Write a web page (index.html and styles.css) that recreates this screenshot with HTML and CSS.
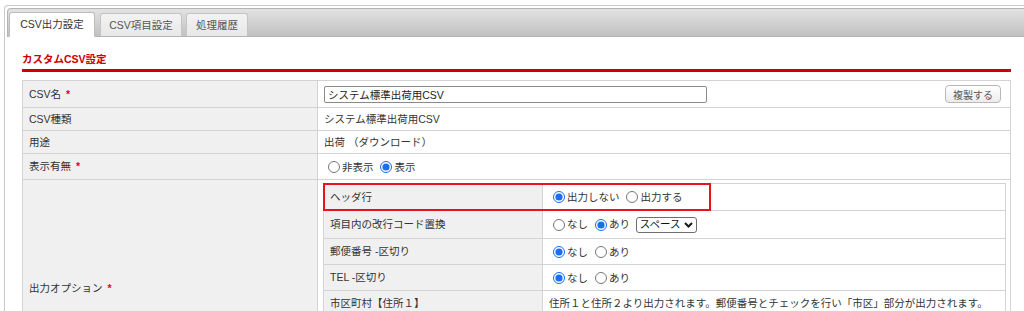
FILE: index.html
```html
<!DOCTYPE html>
<html lang="ja">
<head>
<meta charset="utf-8">
<title>CSV出力設定</title>
<link rel="stylesheet" href="styles.css">
</head>
<body>
<div class="frame">
  <div class="tabbar">
    <div class="tab tab-active tab-w1">CSV出力設定</div>
    <div class="tab tab-w2">CSV項目設定</div>
    <div class="tab tab-w3">処理履歴</div>
  </div>
  <div class="content">
    <h2 class="section-title">カスタムCSV設定</h2>
    <table class="form">
      <colgroup><col class="col-label"><col></colgroup>
      <tr class="h27">
        <th>CSV名<span class="req">*</span></th>
        <td>
          <div class="name-cell">
            <input class="text" type="text" value="システム標準出荷用CSV">
            <button class="btn" type="button">複製する</button>
          </div>
        </td>
      </tr>
      <tr class="h23">
        <th>CSV種類</th>
        <td>システム標準出荷用CSV</td>
      </tr>
      <tr class="h23">
        <th>用途</th>
        <td>出荷 （ダウンロード）</td>
      </tr>
      <tr class="h26">
        <th>表示有無<span class="req">*</span></th>
        <td>
          <label class="opt"><input type="radio" name="disp">非表示</label>
          <label class="opt"><input type="radio" name="disp" checked>表示</label>
        </td>
      </tr>
      <tr class="h-opt">
        <th>出力オプション<span class="req">*</span></th>
        <td class="opt-cell">
          <div class="sub-wrap">
            <table class="sub">
              <colgroup><col class="col-sub"><col></colgroup>
              <tr class="s27">
                <th>ヘッダ行</th>
                <td>
                  <label class="opt"><input type="radio" name="hdr" checked>出力しない</label>
                  <label class="opt"><input type="radio" name="hdr">出力する</label>
                </td>
              </tr>
              <tr class="s28">
                <th>項目内の改行コード置換</th>
                <td>
                  <label class="opt"><input type="radio" name="nl">なし</label>
                  <label class="opt"><input type="radio" name="nl" checked>あり</label>
                  <span class="select">スペース<svg class="chev" width="9" height="6" viewBox="0 0 9 6"><path d="M1 1 L4.5 4.5 L8 1" fill="none" stroke="#1a1a1a" stroke-width="2"/></svg></span>
                </td>
              </tr>
              <tr class="s26">
                <th>郵便番号 -区切り</th>
                <td>
                  <label class="opt"><input type="radio" name="zip" checked>なし</label>
                  <label class="opt"><input type="radio" name="zip">あり</label>
                </td>
              </tr>
              <tr class="s26">
                <th>TEL -区切り</th>
                <td>
                  <label class="opt"><input type="radio" name="tel" checked>なし</label>
                  <label class="opt"><input type="radio" name="tel">あり</label>
                </td>
              </tr>
              <tr class="s26">
                <th>市区町村【住所１】</th>
                <td>住所１と住所２より出力されます。郵便番号とチェックを行い「市区」部分が出力されます。</td>
              </tr>
            </table>
            <div class="highlight"></div>
          </div>
        </td>
      </tr>
    </table>
  </div>
</div>
</body>
</html>
```

FILE: styles.css
```css
html, body {
  margin: 0;
  padding: 0;
  background: #ffffff;
}

body {
  font-family: "Liberation Sans", "Noto Sans CJK JP", sans-serif;
  font-size: 10.5px;
  color: #333333;
  line-height: 1.4;
  overflow: hidden;
}

.frame {
  margin: 5px 0 0 4px;
  border-top: 1px solid #c9c9c9;
  border-left: 1px solid #c9c9c9;
  border-top-left-radius: 4px;
  padding: 2px 0 0 2px;
}

.tabbar {
  height: 27px;
  border: 1px solid #b4b4b4;
  border-right: 0;
  border-top-left-radius: 4px;
  background: linear-gradient(#e2e2e2, #c1c1c1);
  display: flex;
  align-items: flex-end;
  padding-left: 1px;
}

.tab {
  box-sizing: border-box;
  height: 24px;
  margin-bottom: -1px;
  margin-right: 4px;
  border: 1px solid #c4c4c4;
  border-bottom: 1px solid #b4b4b4;
  border-radius: 3px 3px 0 0;
  background: linear-gradient(#f3f3f3, #e8e8e8);
  color: #555555;
  font-size: 10.5px;
  display: flex;
  align-items: center;
  justify-content: center;
}

.tab-active {
  height: 25px;
  background: #ffffff;
  border-color: #bdbdbd;
  border-bottom-color: #ffffff;
  color: #333333;
  margin-right: 5px;
}

.tab-w1 { width: 86px; }
.tab-w2 { width: 82px; }
.tab-w3 { width: 62px; }

.content {
  padding: 0 13px 40px 15px;
}

.section-title {
  margin: 14px 0 0 0;
  padding: 0 0 2px 0;
  font-size: 10.5px;
  line-height: 16px;
  font-weight: bold;
  color: #cc0000;
  border-bottom: 3px solid #c9000b;
}

.form {
  margin-top: 8px;
  width: 989px;
  border-collapse: collapse;
  table-layout: fixed;
}

.col-label { width: 295px; }

.form th,
.form td {
  border: 1px solid #d3d3d3;
  padding: 0 6px;
  vertical-align: middle;
  text-align: left;
  font-weight: normal;
}

.form th {
  background: #f0f0f0;
}

.h27 { height: 27px; }
.h23 { height: 23px; }
.h26 { height: 26px; }
.h-opt { height: 218px; }

.req {
  color: #e60012;
  font-weight: bold;
  margin-left: 5px;
}

.name-cell {
  display: flex;
  align-items: center;
  justify-content: space-between;
  padding-right: 3px;
}

.text {
  box-sizing: border-box;
  width: 383px;
  height: 17px;
  margin: 0;
  padding: 0 3px;
  border: 1px solid #8a8a8a;
  border-radius: 2px;
  font-family: inherit;
  font-size: 10.5px;
  color: #222222;
  background: #ffffff;
}

.btn {
  box-sizing: border-box;
  width: 56px;
  height: 18px;
  margin: 0;
  padding: 0;
  border: 1px solid #b8b8b8;
  border-radius: 4px;
  background: linear-gradient(#ffffff, #ececec);
  font-family: inherit;
  font-size: 10px;
  color: #555555;
}

.opt {
  display: inline-flex;
  align-items: center;
  vertical-align: middle;
}

.opt input {
  width: 12px;
  height: 12px;
  margin: 0 2px 0 4px;
  accent-color: #1a6ef0;
}

.opt-cell.opt-cell {
  vertical-align: top;
  padding: 3px 4px 0 5px;
}

.sub-wrap {
  position: relative;
}

.sub {
  width: 100%;
  border-collapse: collapse;
  table-layout: fixed;
}

.col-sub { width: 219px; }

.form .sub th,
.form .sub td {
  padding: 0 6px;
}

.s27 { height: 27px; }
.s28 { height: 28px; }
.s26 { height: 26px; }

.select {
  display: inline-flex;
  align-items: center;
  box-sizing: border-box;
  height: 16px;
  width: 61px;
  margin-left: 3px;
  padding: 0 3px;
  border: 1px solid #6e6e6e;
  border-radius: 3px;
  vertical-align: middle;
  color: #111111;
  justify-content: space-between;
}

.chev {
  display: block;
}

.highlight {
  position: absolute;
  left: 0;
  top: 0;
  width: 388px;
  height: 28px;
  box-sizing: border-box;
  border: 2px solid #e8141c;
  pointer-events: none;
}
```
